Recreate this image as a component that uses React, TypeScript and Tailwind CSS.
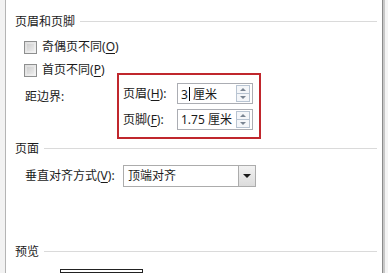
import React from "react";

const font = { fontFamily: '"Noto Sans", "Noto Sans CJK SC", sans-serif' };

function GroupHeader({ label }: { label: string }) {
  return (
    <div className="flex h-4 items-center pr-[5px]">
      <span className="leading-4">{label}</span>
      <div className="ml-[5px] mt-[-1px] h-px flex-1 bg-[#dadada]" />
    </div>
  );
}

function Check({ text, hot }: { text: string; hot: string }) {
  return (
    <div className="flex h-4 items-center pl-[9px]">
      <div className="h-[13px] w-[13px] border border-[#8e8f8f] bg-gradient-to-br from-[#dcdcdc] to-[#f4f4f4] p-[2px]">
        <div className="h-full w-full bg-gradient-to-br from-[#cfcfcf] to-[#ebebeb]" />
      </div>
      <span className="ml-[5px] leading-4">
        {text}(<span className="underline underline-offset-2">{hot}</span>)
      </span>
    </div>
  );
}

function Spinner() {
  return (
    <div className="mr-[2px] flex h-[17px] w-[14px] flex-col">
      <div className="flex flex-1 items-center justify-center border border-[#b8c4d2] bg-[#f4f6f9]">
        <div className="h-0 w-0 border-x-[3px] border-b-[3px] border-x-transparent border-b-[#7a8593]" />
      </div>
      <div className="flex flex-1 items-center justify-center border border-t-0 border-[#b8c4d2] bg-[#f4f6f9]">
        <div className="h-0 w-0 border-x-[3px] border-t-[3px] border-x-transparent border-t-[#7a8593]" />
      </div>
    </div>
  );
}

function SpinRow({ label, hot, children }: { label: string; hot: string; children: React.ReactNode }) {
  return (
    <div className="flex items-center">
      <span className="w-[54px] leading-4">
        {label}(<span className="underline underline-offset-2">{hot}</span>):
      </span>
      <div className="flex h-[21px] w-[76px] items-center border border-[#abadb3] bg-white pl-[3px]">
        <span className="flex-1 leading-4">{children}</span>
        <Spinner />
      </div>
    </div>
  );
}

export default function App() {
  return (
    <div className="flex h-[273px] w-[388px] overflow-hidden bg-white text-[12px] text-[#1b1b1b]" style={font}>
      <div className="w-[5px] bg-[#f2f2f2]" />
      <div className="w-px bg-[#b4b4b4]" />
      <div className="flex flex-1 flex-col pl-[9px] pt-[14px]">
        <GroupHeader label="页眉和页脚" />
        <div className="mt-[9px]">
          <Check text="奇偶页不同" hot="O" />
        </div>
        <div className="mt-[7px]">
          <Check text="首页不同" hot="P" />
        </div>
        <div className="mt-[-5px] flex items-start">
          <span className="ml-[10px] mt-[16px] w-[92px] leading-4">距边界:</span>
          <div className="flex w-[144px] flex-col gap-[5px] border-2 border-[#c0272d] pb-[7px] pl-[4px] pr-[6px] pt-[8px]">
            <SpinRow label="页眉" hot="H">
              3<span className="ml-px mr-[3px] inline-block h-[14px] w-px translate-y-[2px] bg-black" />厘米
            </SpinRow>
            <SpinRow label="页脚" hot="F">
              1.75 厘米
            </SpinRow>
          </div>
        </div>
        <div className="mt-[2px]">
          <GroupHeader label="页面" />
        </div>
        <div className="mt-[8px] flex items-center pl-[10px]">
          <span className="w-[98px] leading-4">
            垂直对齐方式(<span className="underline underline-offset-2">V</span>):
          </span>
          <div className="flex h-[22px] w-[133px] items-center border border-[#acacac] bg-white">
            <span className="flex-1 pl-[4px] leading-4">顶端对齐</span>
            <div className="flex h-full w-[17px] items-center justify-center border-l border-[#acacac] bg-gradient-to-b from-[#f2f2f2] to-[#dcdcdc]">
              <div className="h-0 w-0 border-x-[4px] border-t-[4px] border-x-transparent border-t-[#1b1b1b]" />
            </div>
          </div>
        </div>
        <div className="mt-[57px]">
          <GroupHeader label="预览" />
        </div>
        <div className="ml-[45px] mt-[9px] h-[40px] w-[83px] border border-[#222] bg-white" />
      </div>
      <div className="w-px bg-[#8c8c8c]" />
      <div className="w-[2px] bg-[#c8c8c8]" />
      <div className="w-[3px] bg-[#f4f4f4]" />
    </div>
  );
}
